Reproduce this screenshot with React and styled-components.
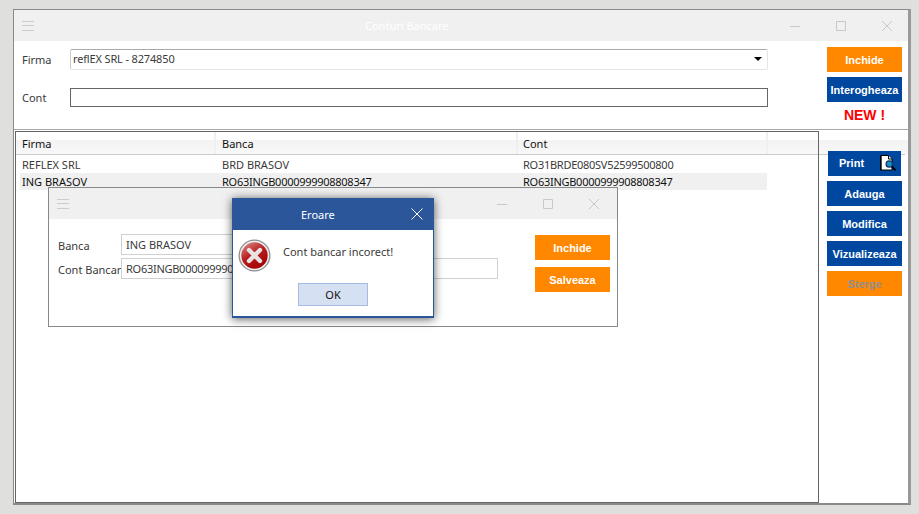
import React from "react";
import styled, { createGlobalStyle } from "styled-components";

const GlobalStyle = createGlobalStyle`
  html, body {
    margin: 0;
    padding: 0;
    width: 919px;
    height: 514px;
    overflow: hidden;
    background: #dfdfdd;
    font-family: "Noto Sans", "Open Sans", sans-serif;
    font-size: 11px;
    color: #3a3a3a;
  }
  * { box-sizing: border-box; }
`;

const Page = styled.div`
  padding: 9px 8px 9px 13px;
  height: 514px;
`;

const Window = styled.div`
  position: relative;
  width: 898px;
  height: 496px;
  display: flex;
  flex-direction: column;
  background: #fff;
  border: 1px solid #8a8a8a;
  border-right: 3px solid #999;
  border-bottom: 2px solid #8a8a8a;
`;

const TitleBar = styled.div`
  height: 31px;
  flex: none;
  display: flex;
  align-items: center;
  padding-left: 8px;
  background: #f0f0f0;
`;

const Hamburger = styled.div`
  width: 12px;
  height: 10px;
  flex: none;
  border-top: 1px solid #ccc;
  border-bottom: 1px solid #ccc;
  display: flex;
  align-items: center;
  &::before {
    content: "";
    width: 100%;
    height: 1px;
    background: #ccc;
  }
`;

const WindowTitle = styled.span`
  margin-left: ${(p) => p.$offset}px;
  font-size: 11px;
  color: #fff;
  white-space: nowrap;
`;

const Controls = styled.div`
  margin-left: auto;
  display: flex;
  align-items: center;
  gap: 36px;
  padding-right: ${(p) => p.$right}px;
`;

const ControlIcon = styled.svg`
  width: 10px;
  height: 10px;
  display: block;
  stroke: #c8c8c8;
  fill: none;
`;

const WindowControls = ({ right }) => (
  <Controls $right={right}>
    <ControlIcon viewBox="0 0 10 10"><path d="M0 5.5h10" /></ControlIcon>
    <ControlIcon viewBox="0 0 10 10"><path d="M.5.5h9v9h-9z" /></ControlIcon>
    <ControlIcon viewBox="0 0 10 10"><path d="M0 0l10 10M10 0L0 10" /></ControlIcon>
  </Controls>
);

const FilterArea = styled.div`
  height: 89px;
  flex: none;
  display: flex;
  border-bottom: 1px solid #aaa;
  padding-left: 8px;
`;

const FilterForm = styled.div`
  width: 746px;
  padding-top: 8px;
  display: flex;
  flex-direction: column;
  gap: 18px;
`;

const FormRow = styled.div`
  display: flex;
  align-items: center;
`;

const FieldLabel = styled.span`
  width: ${(p) => p.$width}px;
  flex: none;
  white-space: nowrap;
  padding: ${(p) => (p.$low ? "2px 0 0" : "0 0 1px")};
`;

const Combo = styled.div`
  flex: 1;
  height: 21px;
  display: flex;
  align-items: center;
  justify-content: space-between;
  padding: 0 5px 2px 2px;
  border: 1px solid #e3e3ea;
  border-top-color: #aaa;
  border-left-color: #ccc;
  border-radius: 2px;
  letter-spacing: -0.15px;
`;

const ComboArrow = styled.div`
  width: 0;
  height: 0;
  border-left: 4px solid transparent;
  border-right: 4px solid transparent;
  border-top: 4px solid #000;
`;

const PlainInput = styled.div`
  flex: 1;
  height: 19px;
  border: 1px solid #666;
`;

const TopActions = styled.div`
  margin-left: 59px;
  padding-top: 6px;
  display: flex;
  flex-direction: column;
  gap: 5px;
`;

const Button = styled.div`
  width: ${(p) => p.$width || 75}px;
  height: 25px;
  flex: none;
  display: flex;
  align-items: center;
  justify-content: center;
  font-family: "Liberation Sans", Arial, sans-serif;
  font-size: 11px;
  font-weight: 700;
  color: ${(p) => (p.$muted ? "#8f8f8f" : "#fff")};
  background: ${(p) => (p.$orange ? "#ff8800" : "#0047a0")};
  white-space: nowrap;
`;

const PrintButton = styled(Button)`
  justify-content: space-between;
  padding: 0 5px 1px 11px;
  margin-left: 1px;
`;

const NewBadge = styled.div`
  text-align: center;
  font-family: "Liberation Sans", Arial, sans-serif;
  font-size: 14px;
  line-height: 16px;
  font-weight: 700;
  color: #f00;
`;

const Body = styled.div`
  flex: 1;
  min-height: 0;
  display: flex;
  padding: 1px 0 0 1px;
`;

const GridPanel = styled.div`
  width: 804px;
  border: 1px solid #666;
`;

const GridRow = styled.div`
  display: grid;
  grid-template-columns: ${(p) => (p.$selected ? "196px 301px 250px" : "200px 301px 251px")};
  margin-left: ${(p) => (p.$selected ? 4 : 0)}px;
  width: ${(p) => (p.$selected ? 747 : 751)}px;
  height: ${(p) => (p.$selected ? 17 : 18)}px;
  align-items: center;
  background: ${(p) => (p.$selected ? "#f0f0f0" : "transparent")};
  color: ${(p) => (p.$selected ? "#111" : "#3a3a3a")};
`;

const Cell = styled.div`
  padding-left: ${(p) => (p.$first && p.$selected ? 2 : 6)}px;
  white-space: nowrap;
  letter-spacing: ${(p) => (p.$iban ? "-0.27px" : "0")};
`;

const GridHead = styled.div`
  height: 23px;
  display: grid;
  grid-template-columns: 200px 302px 250px 1fr;
  background: linear-gradient(#fff 8px, #f3f3f3 8px, #f8f8f8);
  border-bottom: 1px solid #ccc;
  color: #111;
`;

const HeadCell = styled.div`
  padding: 4px 0 0 ${(p) => (p.$last ? 5 : 6)}px;
  border-right: 2px solid #f0f0f0;
`;

const SideColumn = styled.div`
  flex: 1;
  padding: 20px 0 0 8px;
  display: flex;
  flex-direction: column;
  gap: 5px;
  background: linear-gradient(#fff 9px, #f3f3f3 9px, #f8f8f8) top / 100% 24px no-repeat;
  position: relative;
  &::before {
    content: "";
    position: absolute;
    left: 0;
    right: 3px;
    top: 23px;
    height: 1px;
    background: #ccc;
  }
  & > * { position: relative; }
`;

const ChildWindow = styled.div`
  position: absolute;
  left: 34px;
  top: 177px;
  width: 570px;
  height: 140px;
  background: #fff;
  border: 1px solid #888;
  display: flex;
  flex-direction: column;
`;

const ChildBody = styled.div`
  flex: 1;
  display: flex;
  padding: 15px 7px 0 9px;
`;

const ChildForm = styled.div`
  width: 440px;
  display: flex;
  flex-direction: column;
  gap: 3px;
`;

const TextBox = styled.div`
  height: 21px;
  flex: ${(p) => (p.$short ? "none" : 1)};
  width: ${(p) => (p.$short ? "260px" : "auto")};
  border: 1px solid #d0d0d0;
  padding: 2px 4px 0;
  white-space: nowrap;
  letter-spacing: ${(p) => (p.$iban ? "-0.27px" : "0")};
`;

const ChildActions = styled.div`
  margin: 1px 0 0 auto;
  display: flex;
  flex-direction: column;
  gap: 7px;
`;

const Dialog = styled.div`
  position: absolute;
  left: 218px;
  top: 188px;
  width: 202px;
  height: 120px;
  background: #fff;
  border: 1px solid #2b579a;
  border-width: 0 1px 2px 1px;
  box-shadow: 0 1px 9px rgba(0, 0, 0, 0.65);
  display: flex;
  flex-direction: column;
`;

const DialogTitle = styled.div`
  height: 32px;
  flex: none;
  margin: 0 -1px;
  padding: 0 11px 0 69px;
  display: flex;
  align-items: center;
  justify-content: space-between;
  background: #2b579a;
  color: #fff;
  font-size: 11px;
`;

const DialogClose = styled.svg`
  width: 12px;
  height: 12px;
  stroke: #fff;
  fill: none;
`;

const DialogBody = styled.div`
  display: flex;
  align-items: flex-start;
  padding: 9px 0 0 5px;
  gap: 12px;
`;

const DialogText = styled.div`
  padding-top: 5px;
  color: #3a3a3a;
`;

const DialogFooter = styled.div`
  display: flex;
  justify-content: center;
  padding: 11px 0 0 0;
`;

const OkButton = styled.div`
  width: 70px;
  height: 23px;
  display: flex;
  align-items: center;
  justify-content: center;
  background: #d5e0f2;
  border: 1px solid #a5bbe3;
  color: #111;
`;

const ErrorIcon = () => (
  <svg width="33" height="33" viewBox="0 0 33 33" style={{ display: "block" }}>
    <defs>
      <linearGradient id="errRed" x1="0.2" y1="0" x2="0.8" y2="1">
        <stop offset="0" stopColor="#d88080" />
        <stop offset="0.45" stopColor="#b81c1c" />
        <stop offset="1" stopColor="#a00000" />
      </linearGradient>
    </defs>
    <circle cx="16.5" cy="16.5" r="16" fill="#8e8e8e" />
    <circle cx="16.5" cy="16.5" r="14.7" fill="#f1f1f1" />
    <circle cx="16.5" cy="16.5" r="13.2" fill="url(#errRed)" />
    <path d="M11 11l11 11M22 11L11 22" stroke="#e8e2e2" strokeWidth="4.4" strokeLinecap="round" />
  </svg>
);

const PrintIcon = () => (
  <svg width="16" height="16" viewBox="0 0 16 16" style={{ display: "block" }}>
    <path d="M.5.5h8l3.5 3.5v11H.5z" fill="#fff" stroke="#000" />
    <path d="M8.5.5V4H12" fill="#fff" stroke="#000" />
    <path d="M1 1v14.5" stroke="#000" strokeWidth="1.4" />
    <circle cx="9.3" cy="9" r="3.2" fill="#1f8fc8" stroke="#14395f" strokeWidth="1.3" />
    <path d="M11.8 11.5l3.8 3.8" stroke="#000" strokeWidth="1.8" />
  </svg>
);

const rows = [
  { firma: "REFLEX SRL", banca: "BRD BRASOV", cont: "RO31BRDE080SV52599500800" },
  { firma: "ING BRASOV", banca: "RO63INGB0000999908808347", cont: "RO63INGB0000999908808347", selected: true },
];

export default function App() {
  return (
    <Page>
      <GlobalStyle />
      <Window>
        <TitleBar>
          <Hamburger />
          <WindowTitle $offset={331}>Conturi Bancare</WindowTitle>
          <WindowControls right={16} />
        </TitleBar>
        <FilterArea>
          <FilterForm>
            <FormRow>
              <FieldLabel $width={48}>Firma</FieldLabel>
              <Combo>
                <span>reflEX SRL - 8274850</span>
                <ComboArrow />
              </Combo>
            </FormRow>
            <FormRow>
              <FieldLabel $width={48}>Cont</FieldLabel>
              <PlainInput />
            </FormRow>
          </FilterForm>
          <TopActions>
            <Button $orange>Inchide</Button>
            <Button>Interogheaza</Button>
            <NewBadge>NEW !</NewBadge>
          </TopActions>
        </FilterArea>
        <Body>
          <GridPanel>
            <GridHead>
              <HeadCell>Firma</HeadCell>
              <HeadCell>Banca</HeadCell>
              <HeadCell $last>Cont</HeadCell>
            </GridHead>
            {rows.map((r) => (
              <GridRow key={r.cont} $selected={r.selected}>
                <Cell $first $selected={r.selected}>{r.firma}</Cell>
                <Cell $iban={r.selected}>{r.banca}</Cell>
                <Cell $iban>{r.cont}</Cell>
              </GridRow>
            ))}
          </GridPanel>
          <SideColumn>
            <PrintButton $width={73}>
              Print
              <PrintIcon />
            </PrintButton>
            <Button>Adauga</Button>
            <Button>Modifica</Button>
            <Button>Vizualizeaza</Button>
            <Button $orange $muted>Sterge</Button>
          </SideColumn>
        </Body>
        <ChildWindow>
          <TitleBar>
            <Hamburger />
            <WindowControls right={18} />
          </TitleBar>
          <ChildBody>
            <ChildForm>
              <FormRow>
                <FieldLabel $width={63} $low>Banca</FieldLabel>
                <TextBox $short>ING BRASOV</TextBox>
              </FormRow>
              <FormRow>
                <FieldLabel $width={63} $low>Cont Bancar</FieldLabel>
                <TextBox $iban>RO63INGB0000999908808347</TextBox>
              </FormRow>
            </ChildForm>
            <ChildActions>
              <Button $orange>Inchide</Button>
              <Button $orange>Salveaza</Button>
            </ChildActions>
          </ChildBody>
        </ChildWindow>
        <Dialog>
          <DialogTitle>
            <span>Eroare</span>
            <DialogClose viewBox="0 0 12 12"><path d="M.5.5l11 11M11.5.5l-11 11" /></DialogClose>
          </DialogTitle>
          <DialogBody>
            <ErrorIcon />
            <DialogText>Cont bancar incorect!</DialogText>
          </DialogBody>
          <DialogFooter>
            <OkButton>OK</OkButton>
          </DialogFooter>
        </Dialog>
      </Window>
    </Page>
  );
}
